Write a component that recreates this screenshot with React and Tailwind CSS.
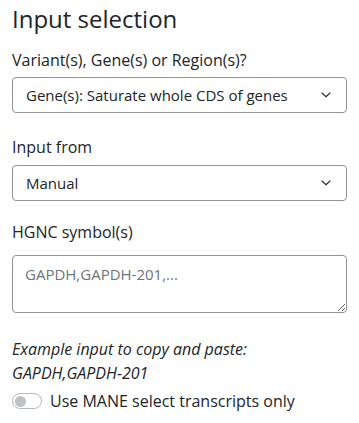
import { useState } from 'react'

function Chevron() {
  return (
    <svg width="12" height="8" viewBox="0 0 12 8" fill="none" className="shrink-0">
      <path d="M2 2 6 5.8 10 2" stroke="#343a40" strokeWidth="1.3" strokeLinecap="round" strokeLinejoin="round" />
    </svg>
  )
}

function SelectBox({ value }) {
  return (
    <div className="flex h-[36px] items-center justify-between rounded-[4px] border border-[#8f949b] bg-white pl-[13px] pr-[14px] text-[15px] text-[#212529]">
      <span>{value}</span>
      <Chevron />
    </div>
  )
}

export default function App() {
  const [mane, setMane] = useState(false)

  return (
    <div className="min-h-[423px] bg-white px-3 pt-[5px] font-['Open_Sans',sans-serif] text-[#212529]">
      <h1 className="text-[24px] leading-[28px]">Input selection</h1>

      <label className="mt-[15px] mb-[5px] block text-base leading-6">Variant(s), Gene(s) or Region(s)?</label>
      <SelectBox value="Gene(s): Saturate whole CDS of genes" />

      <label className="mt-[22px] mb-[6px] block text-base leading-6">Input from</label>
      <SelectBox value="Manual" />

      <label className="mt-[19px] mb-[11px] block text-base leading-6">HGNC symbol(s)</label>
      <textarea
        placeholder="GAPDH,GAPDH-201,..."
        className="block h-[58px] w-full rounded-[4px] border border-[#8f949b] px-3 py-[7px] text-[15px] leading-[22px] placeholder:text-[#6c757d] focus:outline-none"
      />

      <p className="mt-[24px] text-base leading-6 italic">
        Example input to copy and paste:
        <br />
        GAPDH,GAPDH-201
      </p>

      <div className="mt-1 flex items-center gap-2">
        <button
          type="button"
          onClick={() => setMane(!mane)}
          className="flex h-4 w-[30px] items-center rounded-full border border-[#b5b9be] bg-white px-[2px]"
        >
          <span className="h-[11px] w-[11px] rounded-full bg-[#bfc1c4]" />
        </button>
        <span className="text-base leading-6">Use MANE select transcripts only</span>
      </div>
    </div>
  )
}
